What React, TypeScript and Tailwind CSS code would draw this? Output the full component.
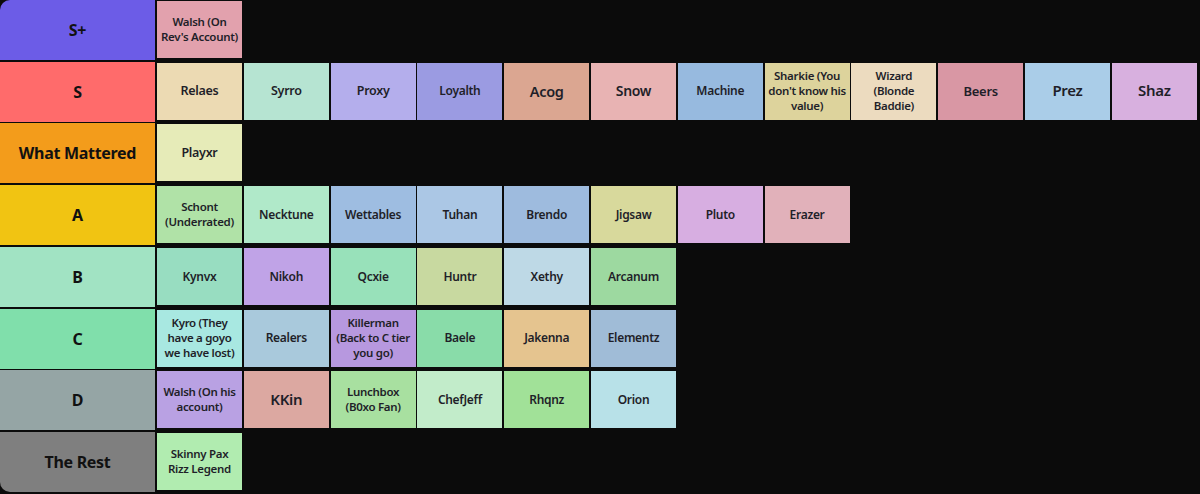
import React from "react";

type Item = { lines: string[]; bg: string; size?: string };
type Tier = { label: string; bg: string; items: Item[] };

const tiers: Tier[] = [
  {
    label: "S+",
    bg: "bg-[#6c5ce7]",
    items: [{ lines: ["Walsh (On", "Rev's Account)"], bg: "bg-[#e2a1ad]" }],
  },
  {
    label: "S",
    bg: "bg-[#ff6b6b]",
    items: [
      { lines: ["Relaes"], bg: "bg-[#ecdab3]", size: "text-[12.5px]" },
      { lines: ["Syrro"], bg: "bg-[#b6e4d2]", size: "text-[12.5px]" },
      { lines: ["Proxy"], bg: "bg-[#b4aeec]", size: "text-[12.5px]" },
      { lines: ["Loyalth"], bg: "bg-[#9b9be2]", size: "text-[12px]" },
      { lines: ["Acog"], bg: "bg-[#dba691]", size: "text-[14.5px]" },
      { lines: ["Snow"], bg: "bg-[#e8b3b3]", size: "text-[14px]" },
      { lines: ["Machine"], bg: "bg-[#97badf]", size: "text-[12px]" },
      { lines: ["Sharkie (You", "don't know his", "value)"], bg: "bg-[#ddd39c]" },
      { lines: ["Wizard", "(Blonde", "Baddie)"], bg: "bg-[#ecdbbf]" },
      { lines: ["Beers"], bg: "bg-[#d997a4]", size: "text-[13px]" },
      { lines: ["Prez"], bg: "bg-[#aacde8]", size: "text-[15px]" },
      { lines: ["Shaz"], bg: "bg-[#d8b0df]", size: "text-[15px]" },
    ],
  },
  {
    label: "What Mattered",
    bg: "bg-[#f39c1b]",
    items: [{ lines: ["Playxr"], bg: "bg-[#e6ebb8]", size: "text-[12.5px]" }],
  },
  {
    label: "A",
    bg: "bg-[#f1c412]",
    items: [
      { lines: ["Schont", "(Underrated)"], bg: "bg-[#b0e2a7]" },
      { lines: ["Necktune"], bg: "bg-[#b0e9c9]", size: "text-[12px]" },
      { lines: ["Wettables"], bg: "bg-[#9ebde1]", size: "text-[12px]" },
      { lines: ["Tuhan"], bg: "bg-[#abc7e5]", size: "text-[12px]" },
      { lines: ["Brendo"], bg: "bg-[#9ebbde]", size: "text-[12px]" },
      { lines: ["Jigsaw"], bg: "bg-[#d8d99c]", size: "text-[12px]" },
      { lines: ["Pluto"], bg: "bg-[#d7aee1]", size: "text-[12px]" },
      { lines: ["Erazer"], bg: "bg-[#e1b1ba]", size: "text-[12px]" },
    ],
  },
  {
    label: "B",
    bg: "bg-[#a1e3c3]",
    items: [
      { lines: ["Kynvx"], bg: "bg-[#98ddc1]", size: "text-[12px]" },
      { lines: ["Nikoh"], bg: "bg-[#c0a3e7]", size: "text-[12px]" },
      { lines: ["Qcxie"], bg: "bg-[#98e1ba]", size: "text-[12px]" },
      { lines: ["Huntr"], bg: "bg-[#c8d9a0]", size: "text-[12px]" },
      { lines: ["Xethy"], bg: "bg-[#bed9e6]", size: "text-[12px]" },
      { lines: ["Arcanum"], bg: "bg-[#9dd9a0]", size: "text-[12px]" },
    ],
  },
  {
    label: "C",
    bg: "bg-[#80dfab]",
    items: [
      { lines: ["Kyro (They", "have a goyo", "we have lost)"], bg: "bg-[#a8e8e1]" },
      { lines: ["Realers"], bg: "bg-[#a9c9dc]", size: "text-[12px]" },
      { lines: ["Killerman", "(Back to C tier", "you go)"], bg: "bg-[#b798df]" },
      { lines: ["Baele"], bg: "bg-[#89dca9]", size: "text-[12px]" },
      { lines: ["Jakenna"], bg: "bg-[#e5c48f]", size: "text-[12px]" },
      { lines: ["Elementz"], bg: "bg-[#a0bcd7]", size: "text-[12px]" },
    ],
  },
  {
    label: "D",
    bg: "bg-[#95a5a5]",
    items: [
      { lines: ["Walsh (On his", "account)"], bg: "bg-[#b9a1e3]" },
      { lines: ["KKin"], bg: "bg-[#dca8a1]", size: "text-[15px]" },
      { lines: ["Lunchbox", "(B0xo Fan)"], bg: "bg-[#a8e0a0]" },
      { lines: ["ChefJeff"], bg: "bg-[#c2ecca]", size: "text-[12px]" },
      { lines: ["Rhqnz"], bg: "bg-[#a1e198]", size: "text-[12px]" },
      { lines: ["Orion"], bg: "bg-[#b8e1e8]", size: "text-[12px]" },
    ],
  },
  {
    label: "The Rest",
    bg: "bg-[#7f7f7f]",
    items: [{ lines: ["Skinny Pax", "Rizz Legend"], bg: "bg-[#b1ecb0]" }],
  },
];

export default function App() {
  return (
    <div
      className="w-[1200px] h-[494px] bg-[#0b0b0b] flex flex-col gap-[1.72px] overflow-hidden"
      style={{ fontFamily: '"Noto Sans", "Open Sans", sans-serif' }}
    >
      {tiers.map((t, i) => (
        <div key={t.label} className="flex h-[60px] shrink-0">
          <div
            className={`${t.bg} w-[155px] shrink-0 flex items-center justify-center text-[16px] tracking-[-0.3px] font-bold text-[#111] ${
              i === 0 ? "rounded-tl-[10px]" : ""
            } ${i === tiers.length - 1 ? "rounded-bl-[10px]" : ""}`}
          >
            {t.label}
          </div>
          <div className="flex gap-[1.8px] ml-[2px] pt-[1px]">
            {t.items.map((it) => (
              <div
                key={it.lines.join(" ")}
                className={`${it.bg} w-[85px] h-[57px] flex flex-col items-center justify-center text-center font-semibold text-[#1f1f29] leading-[1.3] tracking-[-0.3px] whitespace-nowrap ${
                  it.size ?? "text-[11.5px]"
                }`}
              >
                {it.lines.map((l) => (
                  <span key={l}>{l}</span>
                ))}
              </div>
            ))}
          </div>
        </div>
      ))}
    </div>
  );
}
